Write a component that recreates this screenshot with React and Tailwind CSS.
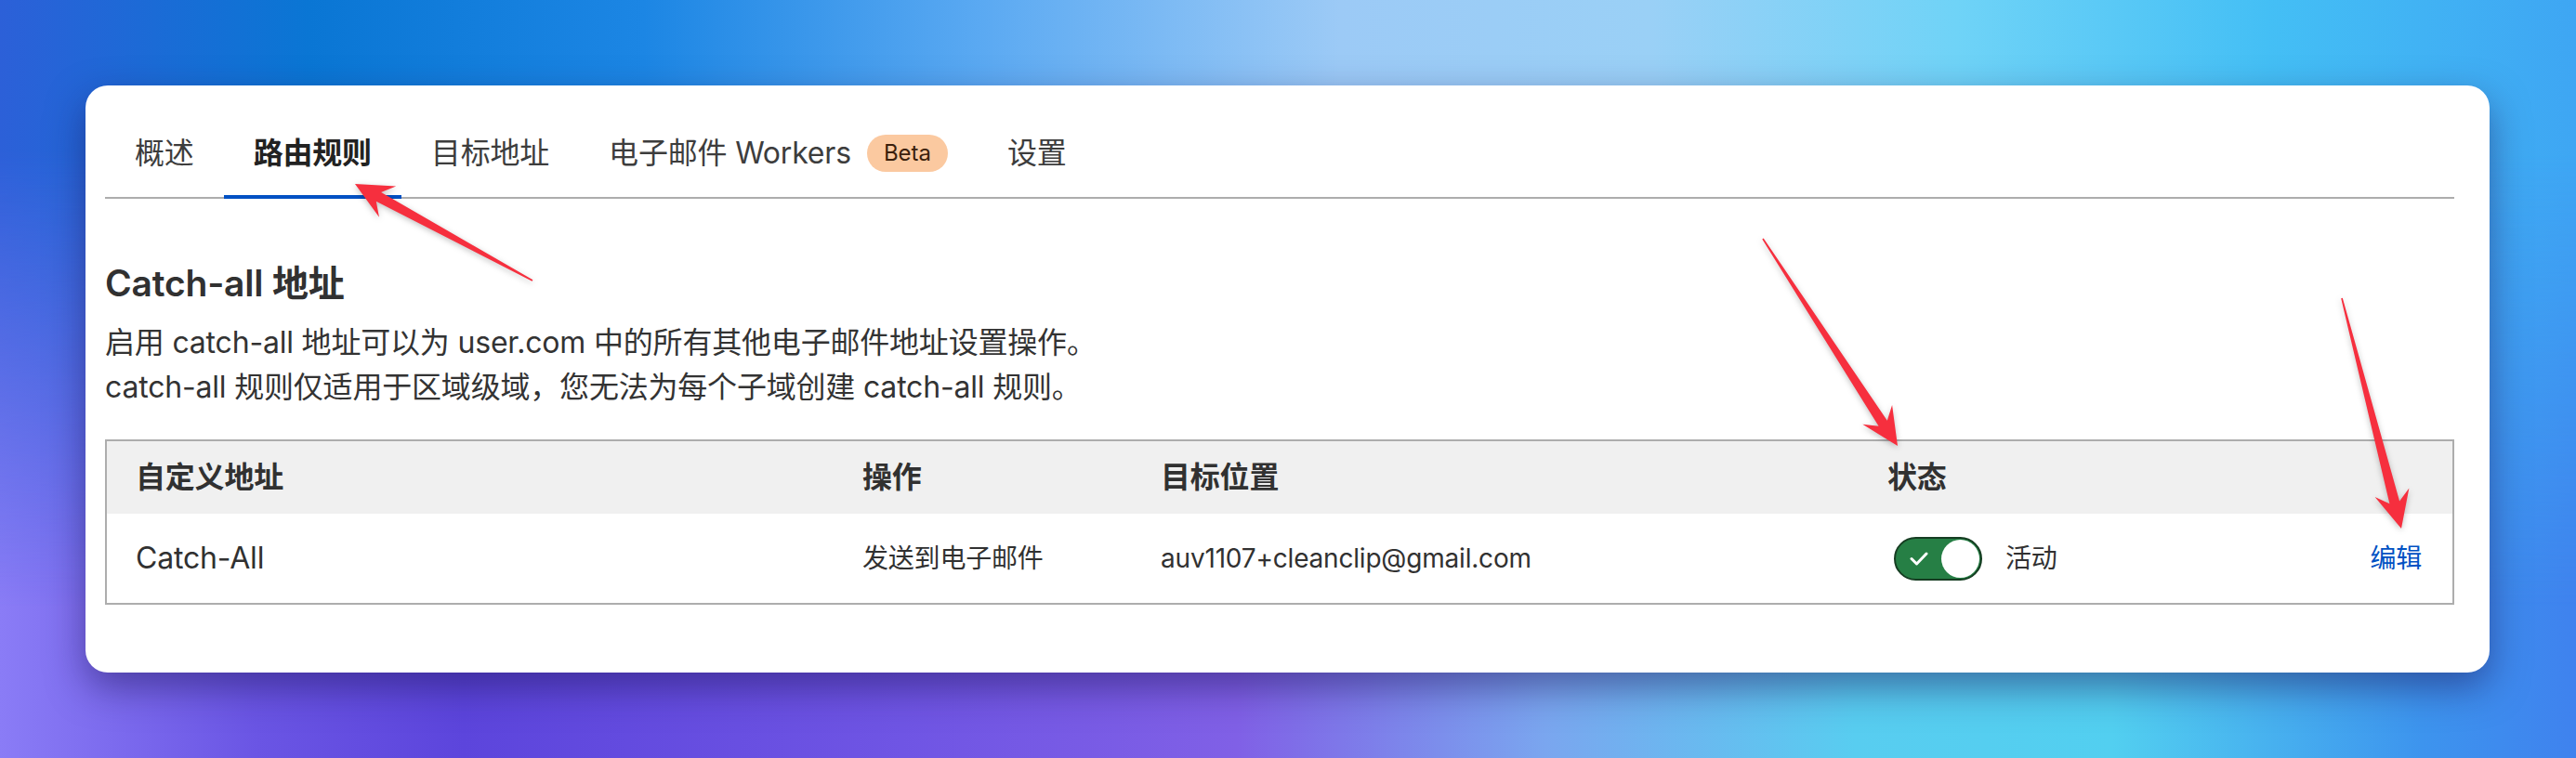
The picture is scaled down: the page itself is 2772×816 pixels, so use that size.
import React from 'react';

const tabs = [
    { label: '概述' },
    { label: '路由规则', active: true },
    { label: '目标地址' },
    { label: '电子邮件 Workers', beta: true },
    { label: '设置' },
];

// red markup arrows drawn over the screenshot
const arrows = [
    { tail: [573, 302], tip: [382, 198] },
    { tail: [1897, 257], tip: [2042, 480] },
    { tail: [2520, 321], tip: [2584, 569] },
];

const arrowPoints = ({ tail, tip }) => {
    const [tx, ty] = tail;
    const [px, py] = tip;
    const len = Math.hypot(px - tx, py - ty);
    const ux = (px - tx) / len;
    const uy = (py - ty) / len;
    const nx = -uy;
    const ny = ux;
    const back = (d, w) => [px - ux * d + nx * w, py - uy * d + ny * w];
    const pts = [
        [tx + nx * 0.8, ty + ny * 0.8],
        back(29, 5.5),
        back(40, 19),
        [px, py],
        back(40, -19),
        back(29, -5.5),
        [tx - nx * 0.8, ty - ny * 0.8],
    ];
    return pts.map(p => p.map(v => v.toFixed(1)).join(',')).join(' ');
};

const Toggle = () => (
    <div className="ml-[7px] w-[95px] h-[47px] rounded-full bg-[#267f45] border-2 border-[#163d22] flex items-center justify-between pl-[15px] pr-[1px]">
        <svg width="20" height="15" viewBox="0 0 20 15" fill="none">
            <path d="M2 7.5 L7.5 13 L18 2" stroke="white" strokeWidth="3" strokeLinecap="round" strokeLinejoin="round" />
        </svg>
        <div className="w-[41px] h-[41px] rounded-full bg-white" />
    </div>
);

const App = () => {
    return (
        <div className="relative w-[2772px] h-[816px] overflow-hidden tracking-[-0.012em] font-['Inter','Noto_Sans_CJK_SC',sans-serif]">
            {/* wallpaper */}
            <div className="absolute inset-0 bg-[image:linear-gradient(to_right,#8a7cf6_0%,#6a55e4_10%,#5c45dc_18%,#6f55e4_35%,#8060e6_48%,#7aa6ef_60%,#58cdf0_72%,#52cff0_82%,#3d94ee_94%,#3f82ee_100%)]" />
            <div className="absolute inset-0 bg-[image:linear-gradient(to_right,#2c60d8_0%,#0a76d4_12%,#1c86e4_25%,#5aa9f2_38%,#9ccaf6_52%,#9ad0f6_64%,#6fd3f7_76%,#44bff5_88%,#3ea6f3_100%)] [mask-image:linear-gradient(to_bottom,black_20%,transparent_80%)]" />

            <div className="relative ml-[92px] mt-[92px] w-[2587px] h-[632px] rounded-[24px] bg-white pt-[49px] pl-[21px] pr-[38px] shadow-[0_16px_40px_rgba(30,20,90,0.5)]">
                {/* Tabs */}
                <div className="flex items-end border-b-2 border-[#adadad]">
                    {tabs.map(tab => (
                        <div
                            key={tab.label}
                            className={`-mb-[2px] px-[32px] pb-[21px] border-b-4 flex items-center text-[32px] leading-[48px] ${tab.active ? 'border-[#0051c3] font-semibold text-[#222222]' : 'border-transparent text-[#3d3d3d]'}`}
                        >
                            <span>{tab.label}</span>
                            {tab.beta && (
                                <span className="ml-[17px] h-[40px] px-[18px] rounded-full bg-[#fbc9a0] text-[#3b1f0c] text-[24px] leading-[40px] tracking-normal">Beta</span>
                            )}
                        </div>
                    ))}
                </div>

                <h2 className="mt-[67px] text-[39px] leading-[48px] font-semibold text-[#313131]">Catch-all 地址</h2>
                <div className="mt-[16px] text-[32px] leading-[48px] text-[#333333]">
                    <p>启用 catch-all 地址可以为 user.com 中的所有其他电子邮件地址设置操作。</p>
                    <p>catch-all 规则仅适用于区域级域，您无法为每个子域创建 catch-all 规则。</p>
                </div>

                {/* Rules table */}
                <div className="mt-[32px] border-2 border-[#adadad] text-[#313131]">
                    <div className="grid grid-cols-[782px_321px_782px_1fr_auto] h-[78px] items-center bg-[#f0f0f0] text-[32px] font-semibold">
                        <div className="pl-[31px]">自定义地址</div>
                        <div className="pl-[31px]">操作</div>
                        <div className="pl-[31px]">目标位置</div>
                        <div className="pl-[31px]">状态</div>
                        <div className="w-[120px]" />
                    </div>
                    <div className="grid grid-cols-[782px_321px_782px_1fr_auto] h-[96px] items-center">
                        <div className="pl-[31px] text-[32px]">Catch-All</div>
                        <div className="pl-[31px] text-[28px]">发送到电子邮件</div>
                        <div className="pl-[31px] text-[28px]">auv1107+cleanclip@gmail.com</div>
                        <div className="pl-[31px] flex items-center gap-[25px]">
                            <Toggle />
                            <span className="text-[28px]">活动</span>
                        </div>
                        <div className="w-[120px] pr-[33px] text-right text-[28px] text-[#0051c3]">编辑</div>
                    </div>
                </div>
            </div>

            {/* annotation arrows */}
            <svg className="absolute top-0 left-0 pointer-events-none drop-shadow-[0_2px_3px_rgba(0,0,0,0.25)]" width="2772" height="816" viewBox="0 0 2772 816">
                {arrows.map((a, i) => (
                    <polygon key={i} points={arrowPoints(a)} fill="#f62f3e" />
                ))}
            </svg>
        </div>
    );
};

export default App;
